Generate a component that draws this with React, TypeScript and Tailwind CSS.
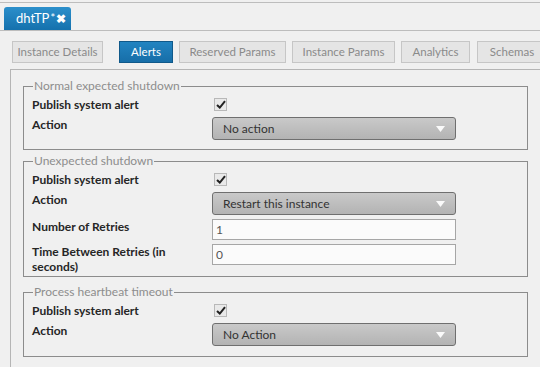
import React from "react";

const FONT = { fontFamily: "Lato, 'Open Sans', 'Liberation Sans', sans-serif" };

function Check() {
  return (
    <div className="w-[13px] h-[13px] border border-[#b8b8b8] bg-[#e9e9e9] flex items-center justify-center">
      <svg width="10" height="9" viewBox="0 0 10 9">
        <path d="M1 5 L3.8 7.6 L9 1.2" stroke="#222" strokeWidth="2" fill="none" />
      </svg>
    </div>
  );
}

function Select({ value }: { value: string }) {
  return (
    <div className="w-[244px] h-[23px] rounded-[3px] border border-[#6f6f6f] bg-gradient-to-b from-[#c9c9c9] to-[#b3b3b3] flex items-center pl-[10px] pr-[10px] text-[12px] text-[#333]">
      <span className="flex-1">{value}</span>
      <svg width="9" height="6" viewBox="0 0 9 6">
        <path d="M0 0 L9 0 L4.5 6 Z" fill="#fafafa" />
      </svg>
    </div>
  );
}

function Input({ value }: { value: string }) {
  return (
    <div className="w-[244px] h-[21px] border border-[#a6a6a6] bg-[#fbfbfb] flex items-center pl-[3px] text-[12px] text-[#555]">
      {value}
    </div>
  );
}

function Row({ label, children, h }: { label: string; children: React.ReactNode; h?: string }) {
  return (
    <div className={`flex ${h ?? ""}`}>
      <div className="w-[180px] pr-[10px] font-bold text-[12px] leading-[15px] text-[#262626]">{label}</div>
      <div>{children}</div>
    </div>
  );
}

function CheckRow() {
  return (
    <div className="flex h-[18px]">
      <div className="w-[180px] pt-[2px] font-bold text-[12px] leading-[15px] text-[#262626]">Publish system alert</div>
      <div className="pt-[3px] pl-[2px]"><Check /></div>
    </div>
  );
}

function Group({ title, children, cls }: { title: string; children: React.ReactNode; cls?: string }) {
  return (
    <fieldset className={`ml-[12px] w-[505px] border border-[#8c8c8c] px-[8px] pt-[2px] ${cls ?? "pb-[9px]"}`}>
      <legend className="px-[1px] ml-[1px] text-[12px] text-[#8d8d8d] leading-[14px]">{title}</legend>
      <div className="flex flex-col gap-[4px]">{children}</div>
    </fieldset>
  );
}

export default function App() {
  const tabs = [
    { t: "Instance Details", w: "w-[91px]", ml: "ml-[12px]" },
    { t: "Alerts", w: "w-[54px]", ml: "ml-[16px]", active: true },
    { t: "Reserved Params", w: "w-[107px]", ml: "ml-[6px]" },
    { t: "Instance Params", w: "w-[103px]", ml: "ml-[6px]" },
    { t: "Analytics", w: "w-[69px]", ml: "ml-[6px]" },
    { t: "Schemas", w: "w-[70px]", ml: "ml-[7px]" },
  ];
  return (
    <div className="w-[540px] h-[367px] overflow-hidden bg-[#f0f0f0]" style={FONT}>
      {/* header */}
      <div className="mt-[2px] h-[29px] border-t border-b border-[#bdbdbd] flex items-end pl-[4px]">
        <div className="h-[23px] pl-[12px] pr-[5px] rounded-t-[3px] bg-gradient-to-b from-[#2b8fcb] to-[#1471ad] text-white text-[13px] flex items-center gap-[1px]">
          <span>dhtTP</span>
          <span className="text-[11px]">*</span>
          <span className="text-[12px] font-bold">✖</span>
        </div>
      </div>

      {/* tabs */}
      <div className="flex pt-[10px]">
        {tabs.map((x) => (
          <div
            key={x.t}
            className={`${x.w} ${x.ml} shrink-0 h-[22px] flex items-center justify-center text-[11.5px] border ${
              x.active
                ? "bg-gradient-to-b from-[#2284c1] to-[#176ea8] border-[#10598a] text-white"
                : "bg-[#e5e5e5] border-[#c6c6c6] text-[#8a8a8a]"
            }`}
          >
            {x.t}
          </div>
        ))}
      </div>

      {/* panel */}
      <div className="ml-[10px] mt-[6px] border-l border-t border-[#b5b5b5] h-[300px] pt-[9px] flex flex-col gap-[4px]">
        <Group title="Normal expected shutdown">
          <CheckRow />
          <Row label="Action"><Select value="No action" /></Row>
        </Group>
        <Group title="Unexpected shutdown" cls="pb-[11px]">
          <CheckRow />
          <Row label="Action"><Select value="Restart this instance" /></Row>
          <Row label="Number of Retries"><Input value="1" /></Row>
          <Row label="Time Between Retries (in seconds)" h="h-[21px]"><Input value="0" /></Row>
        </Group>
        <div className="mt-[4px]">
          <Group title="Process heartbeat timeout" cls="pb-[10px]">
            <CheckRow />
            <Row label="Action"><Select value="No Action" /></Row>
          </Group>
        </div>
      </div>
    </div>
  );
}
